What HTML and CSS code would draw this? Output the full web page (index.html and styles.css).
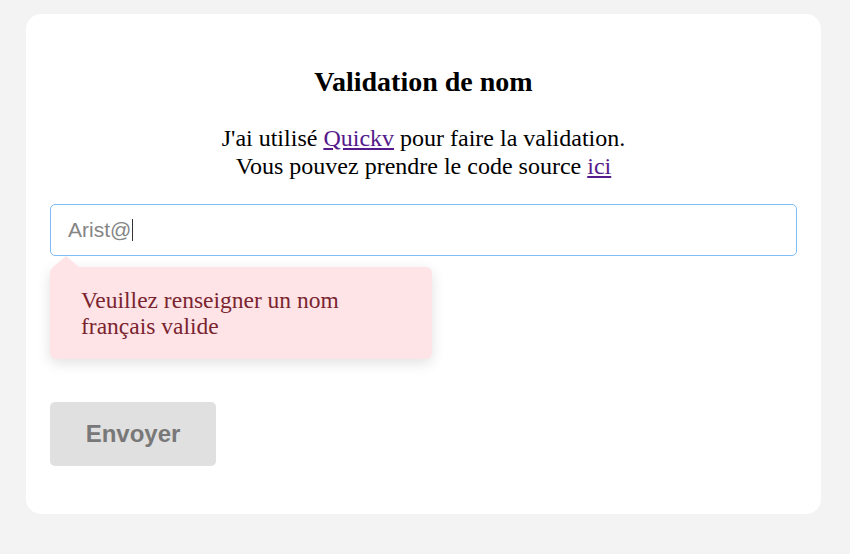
FILE: index.html
```html
<!DOCTYPE html>
<html lang="fr">
<head>
<meta charset="utf-8">
<title>Validation de nom</title>
<link rel="stylesheet" href="styles.css">
</head>
<body>
<main class="card">
  <h1 class="title">Validation de nom</h1>
  <p class="intro">J'ai utilisé <a href="#" class="link">Quickv</a> pour faire la validation.<br>Vous pouvez prendre le code source <a href="#" class="link">ici</a></p>
  <form class="form">
    <div class="field" role="textbox">Arist@<span class="caret"></span></div>
    <div class="tooltip">Veuillez renseigner un nom français valide</div>
    <button type="button" class="submit">Envoyer</button>
  </form>
</main>
</body>
</html>
```

FILE: styles.css
```css
html, body {
  margin: 0;
  padding: 0;
}
body {
  background: #f3f3f3;
  font-family: "Liberation Serif", "Times New Roman", serif;
  color: #000;
  padding: 14px 29px 40px 26px;
}
.card {
  background: #fff;
  border-radius: 15px;
  padding: 28px 24px 48px;
  height: 500px;
  box-sizing: border-box;
}
.title {
  font-size: 28px;
  font-weight: bold;
  text-align: center;
  margin: 24px 0 0;
  line-height: 32px;
}
.intro {
  font-size: 24px;
  text-align: center;
  margin: 27px 0 0;
  line-height: 27.6px;
}
.link {
  color: #551a8b;
}
.form {
  margin-top: 24px;
  display: flex;
  flex-direction: column;
  align-items: flex-start;
}
.field {
  box-sizing: border-box;
  width: 100%;
  height: 52px;
  border: 1px solid #80bdf6;
  border-radius: 5px;
  padding: 0 17px;
  display: flex;
  align-items: center;
  font-family: "Liberation Sans", Arial, sans-serif;
  font-size: 21px;
  color: #858585;
}
.caret {
  display: inline-block;
  width: 1px;
  height: 22px;
  background: #333;
  margin-left: 1px;
}
.tooltip {
  position: relative;
  box-sizing: border-box;
  width: 382px;
  margin-top: 11px;
  padding: 20px 31px 20px 31px;
  background: #fee4e7;
  border-radius: 6px;
  box-shadow: 0 4px 14px rgba(0, 0, 0, 0.12);
  color: #7a2430;
  font-size: 23.5px;
  line-height: 26px;
}
.tooltip::before {
  content: "";
  position: absolute;
  left: 2px;
  top: -11px;
  border-left: 14px solid transparent;
  border-right: 14px solid transparent;
  border-bottom: 12px solid #fee4e7;
}
.submit {
  margin-top: 43px;
  width: 166px;
  height: 64px;
  border: none;
  border-radius: 5px;
  background: #e0e0e0;
  color: #787878;
  font-family: "Liberation Sans", Arial, sans-serif;
  font-size: 24px;
  font-weight: bold;
  padding: 0;
}
```
